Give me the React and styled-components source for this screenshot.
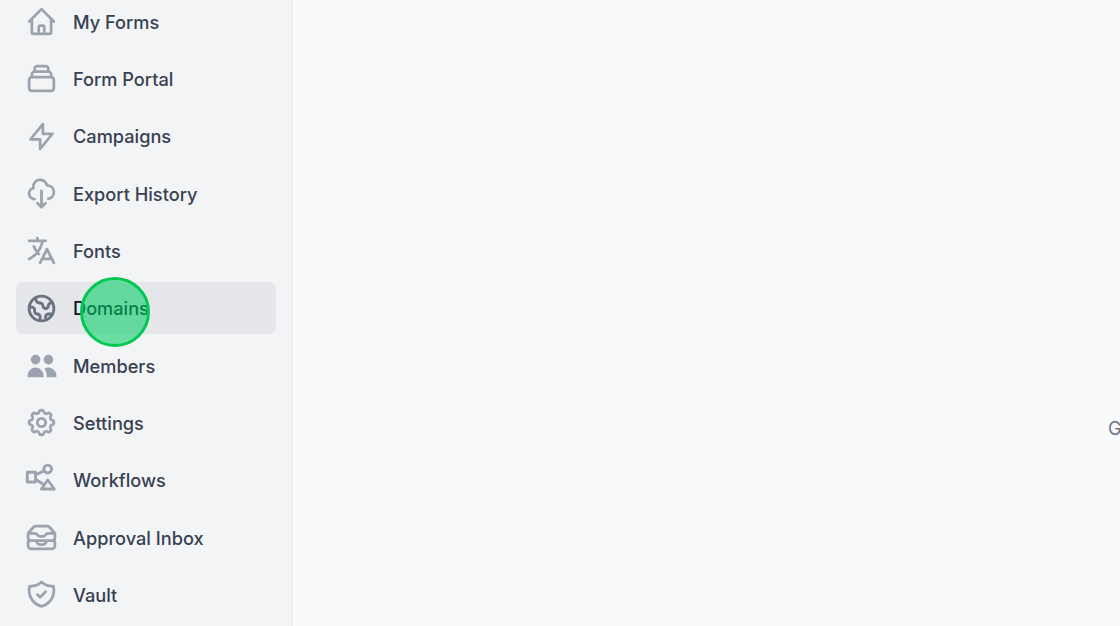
import React from "react";
import styled, { createGlobalStyle } from "styled-components";
import {
  HiOutlineHome,
  HiOutlineCollection,
  HiOutlineLightningBolt,
  HiOutlineCloudDownload,
  HiOutlineTranslate,
  HiOutlineGlobe,
  HiUsers,
  HiOutlineCog,
  HiOutlineShieldCheck,
} from "react-icons/hi";
import { HiOutlineInboxStack } from "react-icons/hi2";

const Global = createGlobalStyle`
  html, body { margin: 0; padding: 0; width: 1120px; height: 626px; overflow: hidden; }
  body { font-family: Inter, "Liberation Sans", sans-serif; background: #f9fafb; }
`;

const Page = styled.div`
  position: relative;
  display: flex;
  width: 1120px;
  height: 626px;
  overflow: hidden;
`;

const Sidebar = styled.aside`
  flex: 0 0 293px;
  box-sizing: border-box;
  height: 626px;
  background: #f3f4f6;
  border-right: 1px solid #e5e7eb;
  padding: 0 16px 0 15.5px;
  overflow: hidden;
`;

const NavList = styled.nav`
  display: flex;
  flex-direction: column;
  gap: 5.33px;
  margin-top: -4.45px;
`;

const NavItem = styled.div`
  display: flex;
  align-items: center;
  gap: 13.5px;
  height: 52px;
  flex: none;
  box-sizing: border-box;
  padding-left: 8px;
  border-radius: 7px;
  font-size: 18.2px;
  font-weight: 500;
  color: ${(p) => (p.$active ? "#111827" : "#374151")};
  background: ${(p) => (p.$active ? "#e5e7eb" : "transparent")};
`;

const IconSlot = styled.span`
  display: flex;
  align-items: center;
  justify-content: center;
  width: 36px;
  height: 36px;
  flex: none;
  color: ${(p) => (p.$active ? "#6b7280" : "#9ca3af")};
  svg { width: ${(p) => p.$size}px; height: ${(p) => p.$size}px; }
  svg path { ${(p) => (p.$stroke ? `stroke-width: ${p.$stroke};` : "")} }
`;

const Main = styled.main`
  flex: 1;
  display: flex;
  align-items: center;
  padding: 230px 0 0 815px;
  box-sizing: border-box;
  height: 626px;
  overflow: hidden;
  background: #f9fafb;
`;

const ClippedText = styled.span`
  font-size: 18.2px;
  color: #6b7280;
  white-space: nowrap;
`;

const Cursor = styled.div`
  position: absolute;
  left: 80px;
  top: 277px;
  width: 70px;
  height: 70px;
  box-sizing: border-box;
  border-radius: 50%;
  border: 3.5px solid #00c853;
  background: rgba(0, 205, 100, 0.56);
`;

const WorkflowIcon = () => (
  <svg viewBox="0 0 24 24" fill="none" stroke="currentColor" strokeWidth="1.9" strokeLinecap="round" strokeLinejoin="round">
    <rect x="2.2" y="6.8" width="5.5" height="6.5" />
    <circle cx="15.8" cy="4.7" r="2.6" />
    <path d="M7.7 8.6l5.8-2.8M7.7 11.5l4.6 3" />
    <path d="M15.8 12l4.4 6h-8.6z" />
  </svg>
);

const items = [
  { label: "My Forms", Icon: HiOutlineHome, size: 33, stroke: 2 },
  { label: "Form Portal", Icon: HiOutlineCollection, size: 33, stroke: 2 },
  { label: "Campaigns", Icon: HiOutlineLightningBolt, size: 33, stroke: 2 },
  { label: "Export History", Icon: HiOutlineCloudDownload, size: 33, stroke: 2 },
  { label: "Fonts", Icon: HiOutlineTranslate, size: 33, stroke: 2 },
  { label: "Domains", Icon: HiOutlineGlobe, size: 33, stroke: 2.1, active: true },
  { label: "Members", Icon: HiUsers, size: 32 },
  { label: "Settings", Icon: HiOutlineCog, size: 33, stroke: 2 },
  { label: "Workflows", Icon: WorkflowIcon, size: 36 },
  { label: "Approval Inbox", Icon: HiOutlineInboxStack, size: 33, stroke: 2 },
  { label: "Vault", Icon: HiOutlineShieldCheck, size: 33, stroke: 2 },
];

export default function App() {
  return (
    <Page>
      <Global />
      <Sidebar>
        <NavList>
          {items.map(({ label, Icon, active, size, stroke }) => (
            <NavItem key={label} $active={active}>
              <IconSlot $active={active} $size={size} $stroke={stroke}>
                <Icon />
              </IconSlot>
              {label}
            </NavItem>
          ))}
        </NavList>
      </Sidebar>
      <Main>
        <ClippedText>Get started</ClippedText>
      </Main>
      <Cursor />
    </Page>
  );
}
